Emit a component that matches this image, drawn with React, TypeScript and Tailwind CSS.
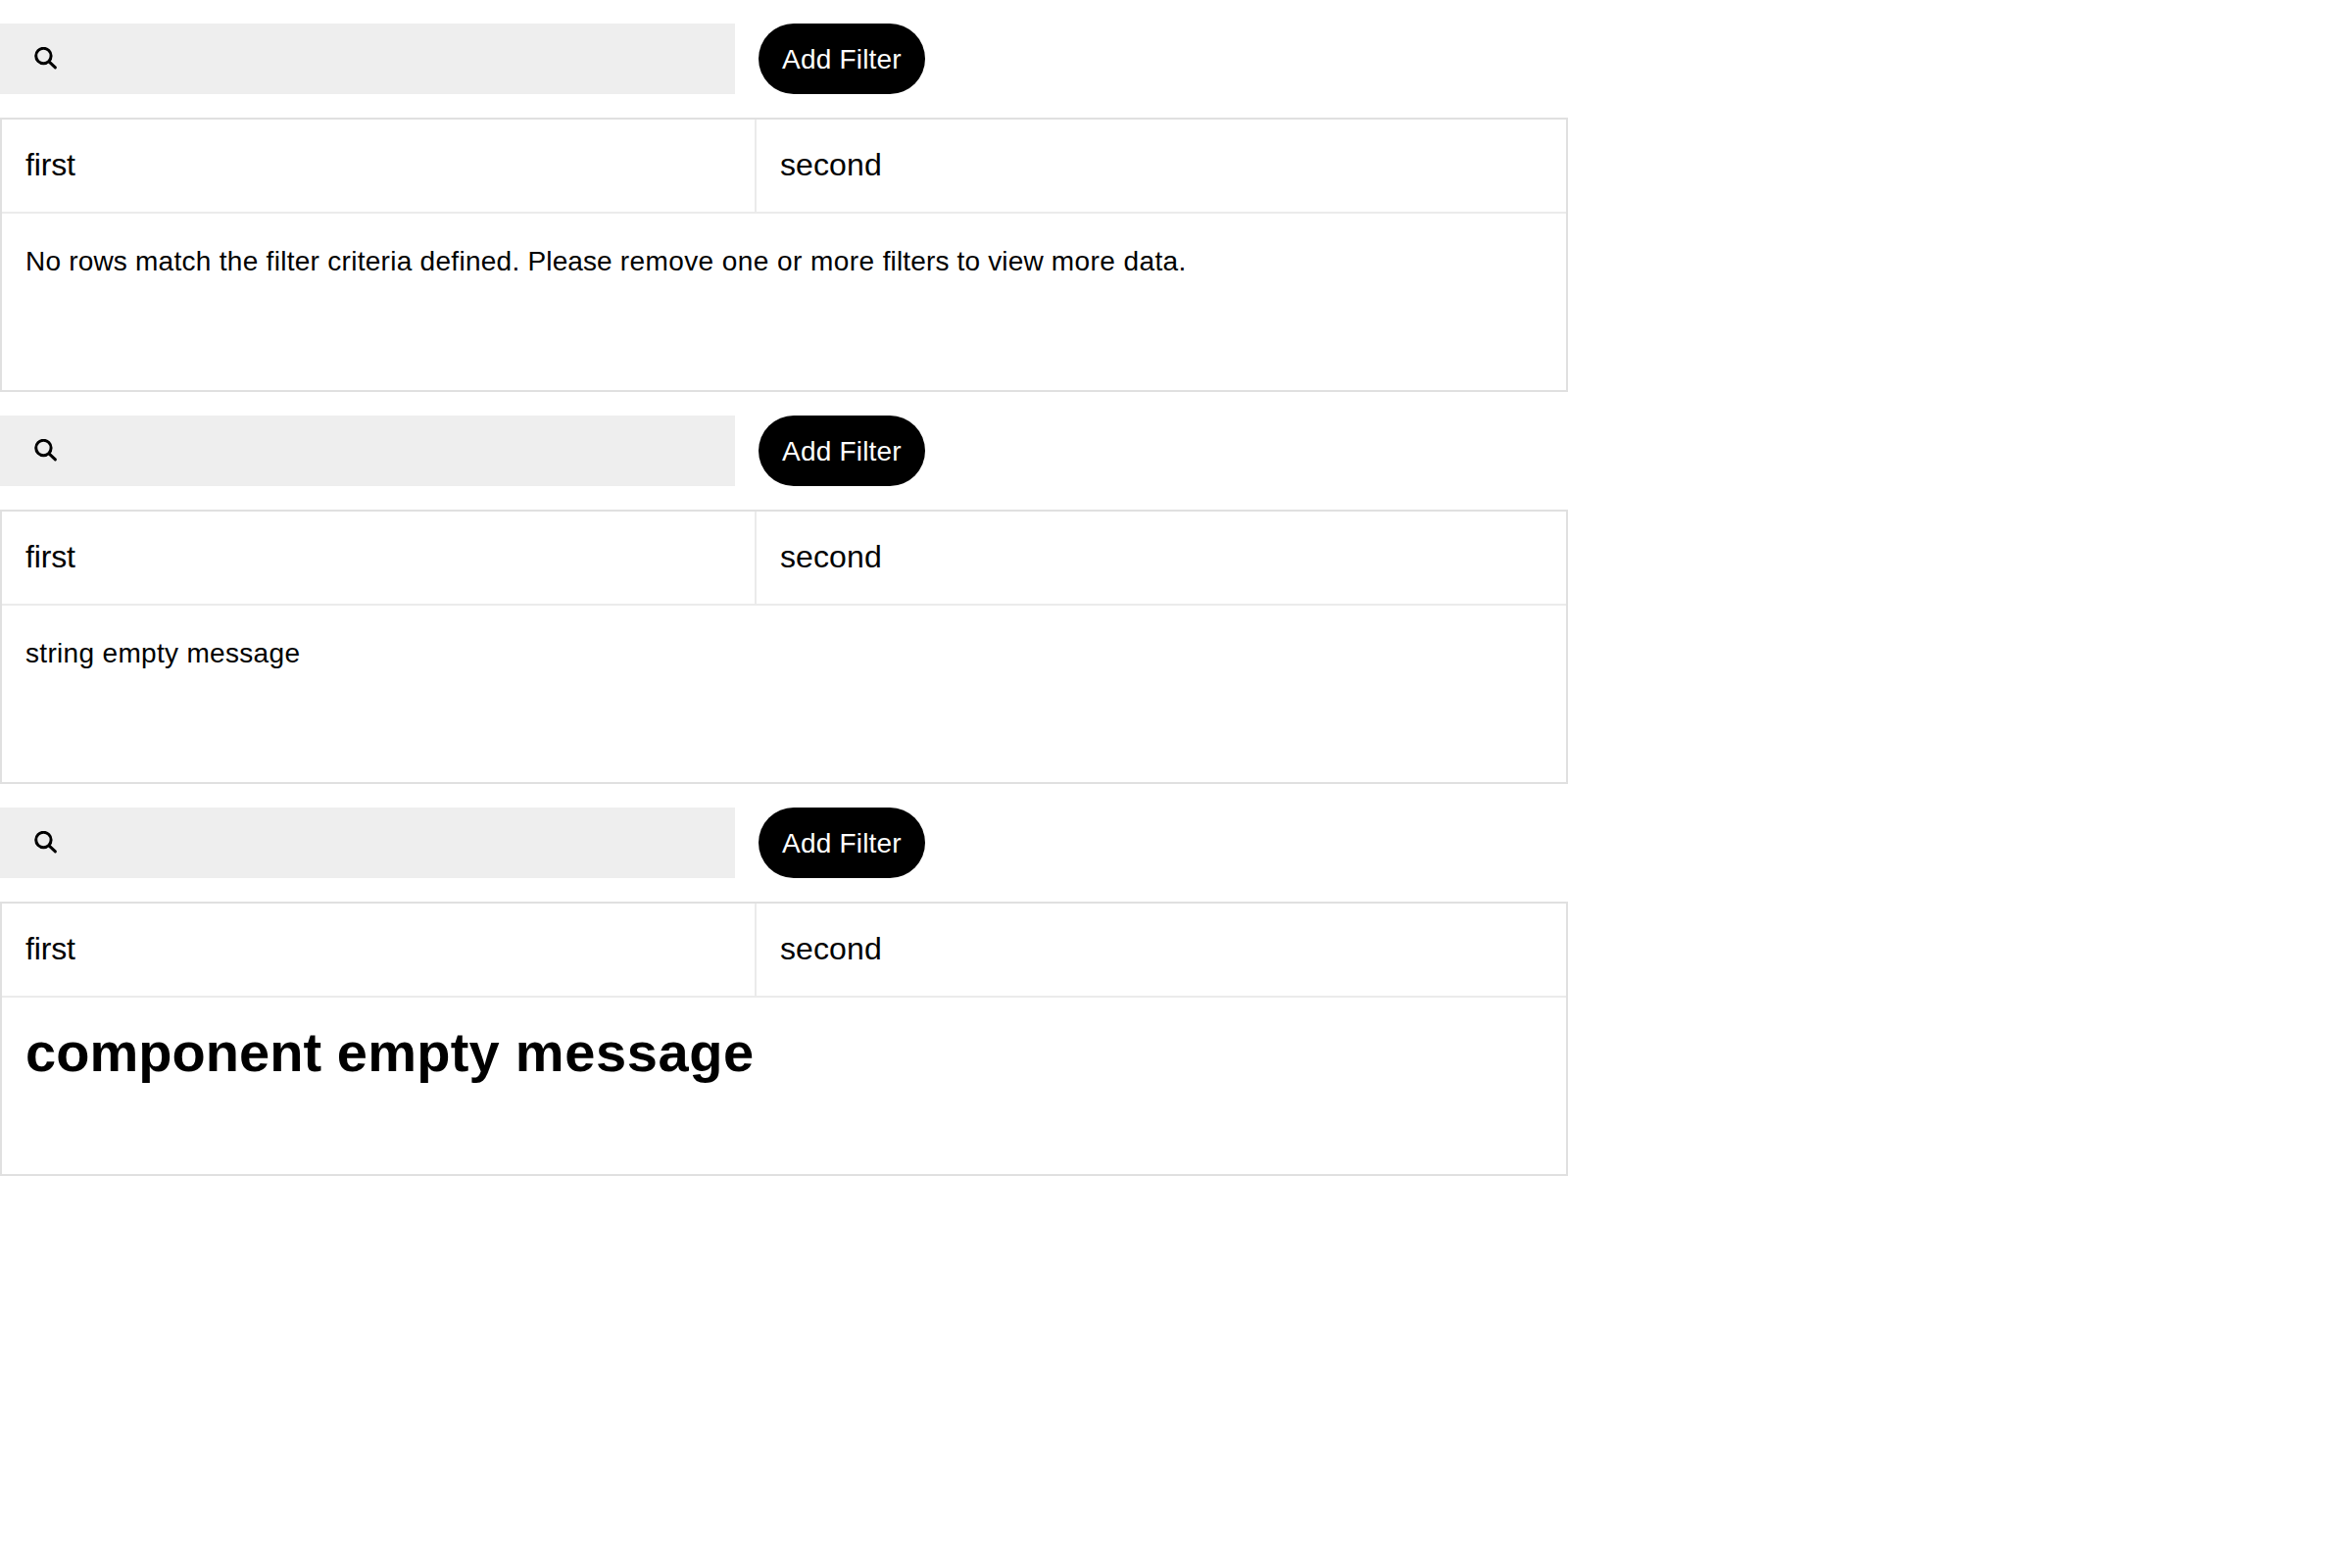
import type { ReactNode } from "react";

function SearchIcon() {
  return (
    <svg width="24" height="24" viewBox="0 0 24 24" fill="none" stroke="black" strokeWidth="3" strokeLinecap="round">
      <circle cx="9.4" cy="9" r="7.7" />
      <path d="M15 14.8L21.4 20.9" />
    </svg>
  );
}

function DataTable({ children }: { children: ReactNode }) {
  return (
    <section className="w-[1600px]">
      <div className="flex gap-6 py-6">
        <label className="flex h-[72px] w-[750px] items-center bg-[#eeeeee] pl-[35px]">
          <SearchIcon />
        </label>
        <button className="h-[72px] w-[170px] rounded-full bg-black pt-0.5 text-[28px] leading-8 tracking-[0.2px] whitespace-nowrap text-white">
          Add Filter
        </button>
      </div>
      <div className="h-[280px] border-2 border-[#e0e0e0]">
        <div className="flex h-[96px] border-b-2 border-[#ebebeb] text-[32px] leading-[92px]">
          <div className="w-[770px] border-r-2 border-[#ebebeb] pl-6 tracking-[-0.15px]">first</div>
          <div className="grow pl-6 tracking-[0.1px]">second</div>
        </div>
        <div className="px-6 pt-6">{children}</div>
      </div>
    </section>
  );
}

export default function App() {
  return (
    <main className="min-h-[1600px] bg-white font-['Liberation_Sans',sans-serif] text-black [font-feature-settings:'liga'_1]">
      <DataTable>
        <p className="text-[28px] leading-[50px]">
          <span className="tracking-[0.19px]">No rows </span>
          <span className="tracking-[0.285px]">match the filter criteria defined. </span>
          <span className="tracking-[0.09px]">Please </span>
          <span className="tracking-[0.427px]">remove one or more </span>
          <span className="tracking-[0.16px]">filters to view </span>
          <span className="tracking-[0.41px]">more data.</span>
        </p>
      </DataTable>
      <DataTable>
        <p className="text-[28px] leading-[50px] tracking-[0.32px]">string empty message</p>
      </DataTable>
      <DataTable>
        <h1 className="text-[56px] leading-[64px] font-bold">
          <span className="tracking-[0.04px]">component </span>
          <span className="tracking-[0.25px]">empty </span>
          <span className="tracking-[0.62px]">message</span>
        </h1>
      </DataTable>
    </main>
  );
}
